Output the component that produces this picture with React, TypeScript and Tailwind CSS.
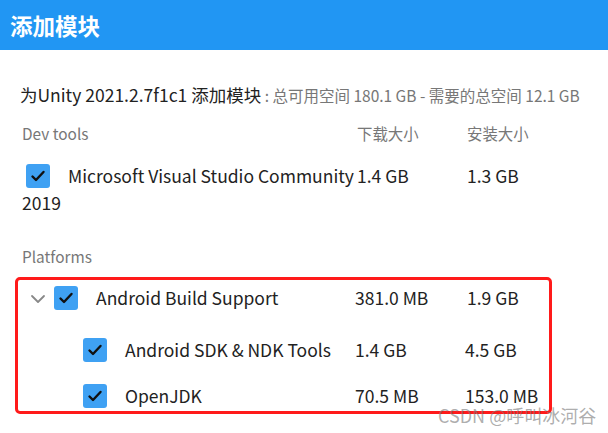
import React from "react";

const FONT = { fontFamily: '"Noto Sans CJK SC", "Noto Sans", sans-serif' };

function Check() {
  return (
    <span className="inline-flex w-[24px] h-[24px] rounded-[3px] bg-[#3fa1f3] items-center justify-center shrink-0">
      <svg width="16" height="16" viewBox="0 0 16 16" fill="none">
        <path d="M2.5 8.5 L6 12 L13.5 4" stroke="#111" strokeWidth="2.4" strokeLinecap="round" strokeLinejoin="round" />
      </svg>
    </span>
  );
}

function Chevron() {
  return (
    <svg width="16" height="10" viewBox="0 0 16 10" fill="none" className="shrink-0">
      <path d="M2 2 L8 8 L14 2" stroke="#888" strokeWidth="1.8" strokeLinecap="round" strokeLinejoin="round" />
    </svg>
  );
}

export default function App() {
  return (
    <div className="relative w-[608px] h-[433px] bg-white overflow-hidden text-[#222]" style={FONT}>
      <div className="h-[50px] bg-[#2196F3] flex items-center px-[10px]">
        <span className="text-white text-[22.5px] font-bold leading-none">添加模块</span>
      </div>

      <div className="pl-[20px] pt-[34px] leading-[22px] whitespace-nowrap">
        <span className="text-[17.5px] text-[#222]">为Unity 2021.2.7f1c1 添加模块</span>
        <span className="text-[15.5px] text-[#777]"> : 总可用空间 180.1 GB - 需要的总空间 12.1 GB</span>
      </div>

      <div className="flex pl-[22px] mt-[17px] text-[15.4px] text-[#777] leading-[20px]">
        <span className="w-[335px]">Dev tools</span>
        <span className="w-[110px]">下载大小</span>
        <span>安装大小</span>
      </div>

      <div className="flex pl-[22px] mt-[20px] text-[17.5px] leading-[26px]">
        <div className="w-[334px]">
          <span className="inline-flex align-middle ml-[4px] mr-[18px] relative top-[-2px]"><Check /></span>
          Microsoft Visual Studio Community 2019
        </div>
        <span className="w-[110px] pl-[1px]">1.4 GB</span>
        <span className="pl-[1px]">1.3 GB</span>
      </div>

      <div className="pl-[22px] mt-[30px] text-[15.4px] text-[#777] leading-[20px]">Platforms</div>

      <div className="ml-[15px] mt-[11px] w-[537px] h-[137px] border-[3px] border-[#ff1a1a] rounded-[5px] text-[17.5px] leading-[18px]">
        <div className="flex items-center h-[32px] mt-[2px]">
          <div className="w-[337px] flex items-center">
            <span className="ml-[12px] mr-[8px] mt-[2px]"><Chevron /></span>
            <Check />
            <span className="ml-[18px]">Android Build Support</span>
          </div>
          <span className="w-[112px]">381.0 MB</span>
          <span>1.9 GB</span>
        </div>
        <div className="flex items-center h-[32px] mt-[20px]">
          <div className="w-[337px] flex items-center pl-[65px]">
            <Check />
            <span className="ml-[18px]">Android SDK &amp; NDK Tools</span>
          </div>
          <span className="w-[110px]">1.4 GB</span>
          <span>4.5 GB</span>
        </div>
        <div className="flex items-center h-[32px] mt-[14px]">
          <div className="w-[337px] flex items-center pl-[65px]">
            <Check />
            <span className="ml-[18px]">OpenJDK</span>
          </div>
          <span className="w-[110px]">70.5 MB</span>
          <span>153.0 MB</span>
        </div>
      </div>

      <div className="absolute left-[438px] top-[407px] text-[18px] leading-[16px] text-[#777]/60 whitespace-nowrap">
        CSDN @呼叫冰河谷
      </div>
    </div>
  );
}
